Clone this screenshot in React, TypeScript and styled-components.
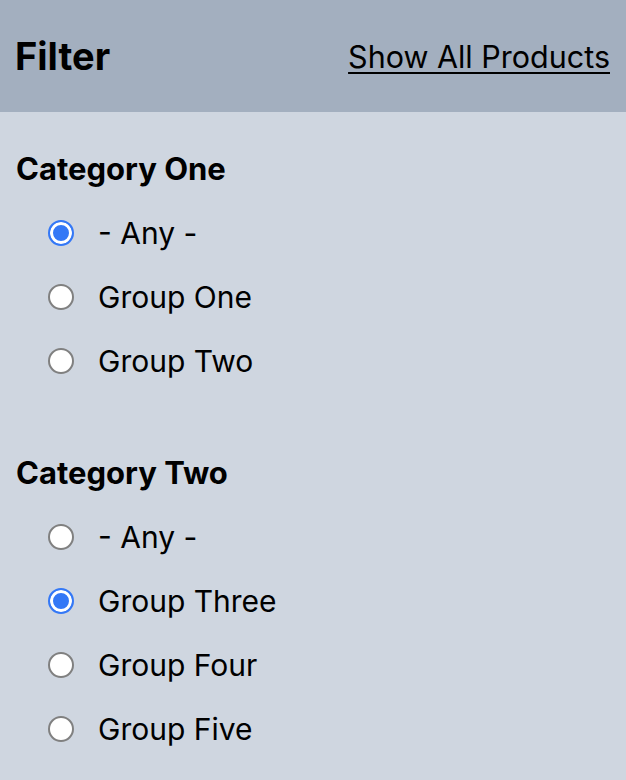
import React, { useState } from "react";
import styled, { createGlobalStyle } from "styled-components";

const GlobalStyle = createGlobalStyle`
  html, body {
    margin: 0;
    padding: 0;
    background: #cfd6e0;
    font-family: Inter, "Liberation Sans", Arial, sans-serif;
    color: #000;
  }
  * { box-sizing: border-box; }
`;

type Category = {
  name: string;
  title: string;
  options: string[];
  initial: string;
};

const categories: Category[] = [
  {
    name: "category-one",
    title: "Category One",
    options: ["- Any -", "Group One", "Group Two"],
    initial: "- Any -",
  },
  {
    name: "category-two",
    title: "Category Two",
    options: ["- Any -", "Group Three", "Group Four", "Group Five"],
    initial: "Group Three",
  },
];

function FilterSection({ category }: { category: Category }) {
  const [value, setValue] = useState(category.initial);
  return (
    <StyledSection>
      <SectionTitle>{category.title}</SectionTitle>
      <OptionList>
        {category.options.map((option) => (
          <OptionRow key={option}>
            <Radio
              type="radio"
              name={category.name}
              checked={value === option}
              onChange={() => setValue(option)}
            />
            <span>{option}</span>
          </OptionRow>
        ))}
      </OptionList>
    </StyledSection>
  );
}

function App() {
  return (
    <>
      <GlobalStyle />
      <StyledPanel>
        <Header>
          <Title>Filter</Title>
          <ShowAll href="#">Show All Products</ShowAll>
        </Header>
        <Body>
          {categories.map((category) => (
            <FilterSection key={category.name} category={category} />
          ))}
        </Body>
      </StyledPanel>
    </>
  );
}

export default App;

const StyledPanel = styled.div`
  min-height: 100vh;
  background: #cfd6e0;
`;

const Header = styled.header`
  display: flex;
  align-items: center;
  justify-content: space-between;
  height: 112px;
  padding: 0 16px 0 15px;
  background: #a3afbf;
`;

const Title = styled.h1`
  margin: 0;
  font-size: 38px;
  font-weight: 700;
`;

const ShowAll = styled.a`
  color: #000;
  font-size: 30.5px;
  text-decoration: underline;
  text-underline-offset: 4px;
  text-decoration-thickness: 2px;
`;

const Body = styled.div`
  display: flex;
  flex-direction: column;
  gap: 48px;
  padding: 25px 16px 0;
`;

const StyledSection = styled.section`
  display: flex;
  flex-direction: column;
`;

const SectionTitle = styled.h2`
  margin: 0;
  height: 64px;
  line-height: 64px;
  font-size: 31px;
  font-weight: 700;
`;

const OptionList = styled.div`
  display: flex;
  flex-direction: column;
  padding-left: 32px;
`;

const OptionRow = styled.label`
  display: flex;
  align-items: center;
  gap: 24px;
  height: 64px;
  font-size: 30px;
  cursor: pointer;
`;

const Radio = styled.input`
  appearance: none;
  width: 26px;
  height: 26px;
  margin: 0;
  flex-shrink: 0;
  border-radius: 50%;
  border: 2px solid #808080;
  background: #fff;
  cursor: pointer;

  &:checked {
    border: 2px solid #3478f6;
    background: #3478f6;
    box-shadow: inset 0 0 0 3px #fff;
  }
`;
